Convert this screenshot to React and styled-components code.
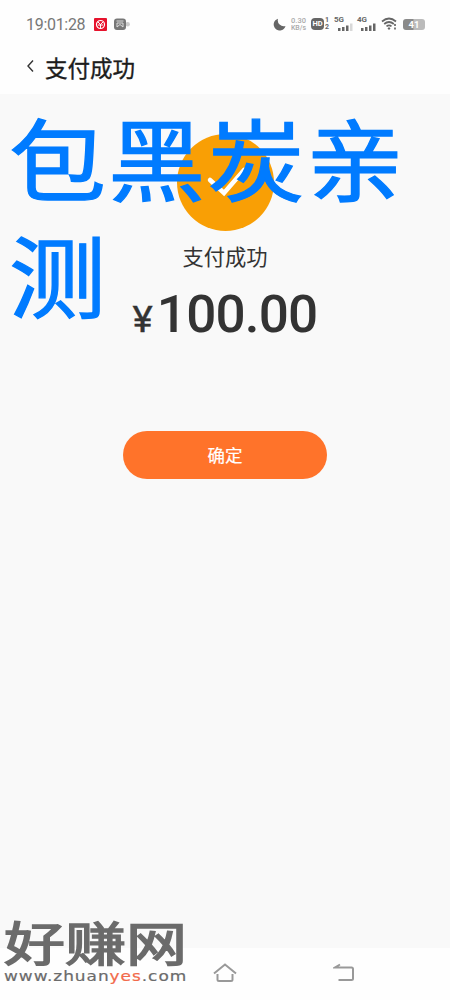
import React from "react";
import styled, { createGlobalStyle } from "styled-components";

const Global = createGlobalStyle`
  * { box-sizing: border-box; }
  body { margin: 0; background: #fff; font-family: Roboto, "Noto Sans CJK SC", sans-serif; }
`;
const Screen = styled.div`
  position: relative; width: 450px; height: 1000px; overflow: hidden;
  display: flex; flex-direction: column; background: #fefefe;
`;
const StatusBar = styled.header`
  height: 48px; padding: 0 23px 0 26px; display: flex; align-items: center;
  justify-content: space-between; color: #777;
`;
const Group = styled.div`
  display: flex; align-items: center; gap: ${p => p.$gap || 0}px;
`;
const Clock = styled.span`
  font: 400 16px/20px Roboto, sans-serif; letter-spacing: -0.3px; width: 61px; padding-top: 2px; margin-right: 7px;
  white-space: nowrap;
`;
const Speed = styled.div`
  font: 500 7.5px/8px Roboto, sans-serif; color: #aaa; width: 17px; text-align: center; white-space: nowrap;
  span { display: block; font-size: 7px; line-height: 7px; }
`;
const Hd = styled.div`
  width: 13px; height: 12px; border-radius: 4px; background: #666; color: #fff;
  font: 700 7.5px/12px Roboto, sans-serif; text-align: center;
`;
const SimNumbers = styled.div`
  font: 700 7px/7px Roboto, sans-serif; color: #666; width: 5px;
`;
const Network = styled.div`
  width: 19px; height: 14px; display: flex; flex-direction: column; color: #666;
  font: 700 8px/6px Roboto, sans-serif;
  svg { align-self: flex-end; }
`;
const Battery = styled.div`
  width: 22px; height: 11px; border-radius: 3px; color: #fff;
  background: linear-gradient(90deg, #8a8a8a 45%, #bbb 50%);
  font: 700 9.5px/12px Roboto, sans-serif; text-align: center; margin-right: 2px;
`;
const TitleBar = styled.div`
  height: 46px; padding: 0 26px; display: flex; align-items: center; gap: 10px;
`;
const BackIcon = styled.svg`
  margin-bottom: 10px;
`;
const Title = styled.h1`
  margin: 0; font: 400 22.5px/30px "Noto Sans CJK SC", sans-serif; color: #1c1c1c;
  -webkit-text-stroke: 0.35px #1c1c1c; padding-bottom: 9px;
`;
const Main = styled.main`
  flex: 1; background: #f9f9f9; display: flex; flex-direction: column; align-items: center; padding-top: 40px;
`;
const Message = styled.p`
  margin: 10px 0 0; font: 400 21.3px/30px "Noto Sans CJK SC", sans-serif; color: #333;
`;
const Amount = styled.div`
  display: flex; align-items: baseline; margin-top: 14px; height: 60px; color: #333;
  font: 500 51px/60px Roboto, sans-serif; letter-spacing: -0.8px; transform: scaleX(1.04);
`;
const Currency = styled.span`
  font-size: 37px; font-weight: 400; -webkit-text-stroke: 0.4px #333; letter-spacing: 0; margin-right: 4px;
`;
const Confirm = styled.button`
  margin-top: 86px; width: 204px; height: 48px; border: 0; border-radius: 24px;
  background: #ff732a; color: #fff; padding: 0 0 1px;
  font: 400 17.5px/24px "Noto Sans CJK SC", sans-serif; -webkit-text-stroke: 0.2px #fff;
`;
const NavBar = styled.nav`
  height: 52px; display: flex; align-items: center; padding: 0 95px 3px 213px; justify-content: space-between;
`;
const Note = styled.div`
  position: absolute; left: 9px; top: 98px; width: 412px; color: #007bff;
  font: 400 97px/128px "Noto Sans CJK SC", sans-serif; letter-spacing: 2.2px; -webkit-text-stroke: 1.4px #007bff;
  transform: scaleY(0.91); transform-origin: 0 0;
`;
const Watermark = styled.div`
  position: absolute; left: 4px; top: 916px; width: 188px; color: #6b6b6b;
`;
const WatermarkName = styled.div`
  height: 52px; font: 400 61px/50px "Noto Sans CJK SC", sans-serif;
  transform: scaleY(0.77); white-space: nowrap; -webkit-text-stroke: 2px #6b6b6b;
`;
const Address = styled.div`
  font: 400 14px/16px "DejaVu Sans", sans-serif; white-space: nowrap;
  transform: scaleX(1.21); transform-origin: 0 0; letter-spacing: 0.8px;
  -webkit-text-stroke: 0.2px currentColor;
  em { font-style: normal; color: #f26a4b; }
`;

const Signal = ({ weak }) => (
  <svg width="15" height="8" viewBox="0 0 15 8" fill="#666">
    <path d="M0 5h2.5v3H0zM4 4h2.5v4H4zM8 2.5h2.5V8H8z" />
    <path d="M12 0.5h2.5V8H12z" opacity={weak ? 0.25 : 1} />
  </svg>
);

export default function App() {
  return (
    <Screen>
      <Global />
      <StatusBar>
        <Group>
          <Clock>19:01:28</Clock>
          <Group $gap={7}>
            <svg width="13" height="13" viewBox="0 0 13 13">
              <rect width="13" height="13" rx="1" fill="#e6132d" />
              <circle cx="6.5" cy="6.5" r="4" fill="none" stroke="#fff" strokeWidth="1.2" />
              <path d="M4 4l2.5 2.4L9 4M6.5 6v4M4 7h5" stroke="#fff" fill="none" />
            </svg>
            <svg width="17" height="13" viewBox="0 0 17 13">
              <circle cx="13.7" cy="6.3" r="2.2" fill="#ccc" />
              <rect y="0.5" width="12" height="11.5" rx="3" fill="#777" />
              <path d="M2.5 3h7M3 5h6v4M3 5v4l3-2.5L9 9" fill="none" stroke="#ddd" />
            </svg>
          </Group>
        </Group>
        <Group $gap={4}>
          <svg width="13" height="13" viewBox="0 0 13 13"><path d="M5 0.7A6 6 0 1 0 12.5 8 6 6 0 0 1 5 0.7Z" fill="#666" /></svg>
          <Speed>0.30<span>KB/s</span></Speed>
          <Group $gap={1}><Hd>HD</Hd><SimNumbers>1<br />2</SimNumbers></Group>
          <Network>5G<Signal weak /></Network>
          <Group $gap={5}>
            <Network>4G<Signal /></Network>
            <svg width="17" height="14" viewBox="0 0 17 14" fill="none" stroke="#666" strokeWidth="1.7">
              <path d="M1 4.5Q8 -1.5 15 4.5M3.2 7Q8 3 12.8 7M5.5 9.4Q8 7.4 10.5 9.4" />
              <path d="M8 10l1.5 1.5L8 13l-1.5-1.5z" fill="#666" stroke="none" /><path d="M14 7v2M14 10.5v2" />
            </svg>
            <Battery>41</Battery>
          </Group>
        </Group>
      </StatusBar>
      <TitleBar>
        <BackIcon width="9" height="14" viewBox="0 0 9 14"><path d="M7 1.5L2 7l5 5.5" fill="none" stroke="#333" strokeWidth="1.4" /></BackIcon>
        <Title>支付成功</Title>
      </TitleBar>
      <Main>
        <svg width="97" height="97" viewBox="0 0 97 97">
          <circle cx="48.5" cy="48.5" r="48.5" fill="#f99f05" />
          <path d="M33 46l14 13 20-23" fill="none" stroke="#fff" strokeWidth="4.5" strokeLinecap="round" />
        </svg>
        <Message>支付成功</Message>
        <Amount><Currency>¥</Currency>100.00</Amount>
        <Confirm>确定</Confirm>
      </Main>
      <NavBar>
        <svg width="24" height="20" viewBox="0 0 24 20" fill="none" stroke="#999" strokeWidth="2">
          <path d="M1 10.5L12 1.5l11 9M4.5 11v5.5q0 1.5 1.5 1.5h12q1.5 0 1.5-1.5V11" />
        </svg>
        <svg width="22" height="20" viewBox="0 0 22 20" fill="none" stroke="#999" strokeWidth="2">
          <path d="M7 1.5L2 4.5h16.5q1.5 0 1.5 1.5v9.5q0 1.5-1.5 1.5H5.5" />
        </svg>
      </NavBar>
      <Note>包黑炭亲测</Note>
      <Watermark>
        <WatermarkName>好赚网</WatermarkName>
        <Address>www.zhuan<em>yes</em>.com</Address>
      </Watermark>
    </Screen>
  );
}
